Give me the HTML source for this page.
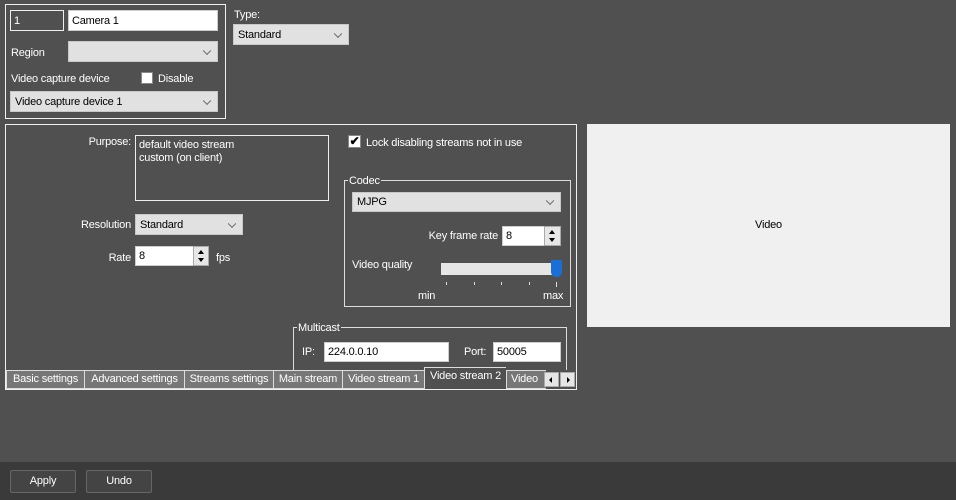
<!DOCTYPE html>
<html><head><meta charset="utf-8"><style>
*{box-sizing:border-box;margin:0;padding:0}
body{width:956px;height:500px;background:#505050;position:relative;overflow:hidden;font-family:"Liberation Sans",Arial,sans-serif;font-size:11px;letter-spacing:-0.2px;color:#fff}
.a{position:absolute}
.box{position:absolute;border:1px solid #f0f0f0}
.inp{position:absolute;background:#fff;color:#000;padding:3px 3px;line-height:14px;border:1px solid #ccc}
.cmb{position:absolute;background:#e1e1e1;color:#000;padding:0 4px;border:1px solid #c8c8c8}
.cmb:after{content:"";position:absolute;right:7px;top:50%;width:5px;height:5px;border-right:1px solid #666;border-bottom:1px solid #666;transform:translateY(-70%) rotate(45deg)}
.lbl{position:absolute;line-height:14px;white-space:nowrap}
.spin{position:absolute;background:#e6e6e6;border:1px solid #aaa}
.spin i{position:absolute;left:4px;width:0;height:0;border-left:3px solid transparent;border-right:3px solid transparent}
.leg{position:absolute;background:#505050;padding:0 1px;line-height:12px}
.tab{position:absolute;top:370px;height:19px;background:#777;border:1px solid #ddd;border-right:none;color:#fff;line-height:17px;text-align:center;white-space:nowrap;overflow:hidden}
.btn{position:absolute;top:470px;height:23px;background:#444;border:1px solid #666;border-radius:2px;text-align:center;line-height:21px}
</style></head><body>
<div class="box" style="left:5px;top:4px;width:221px;height:115px"></div>
<div class="inp" style="left:10px;top:10px;width:54px;height:21px;background:#505050;color:#fff;border:1px solid #eee">1</div>
<div class="inp" style="left:68px;top:10px;width:150px;height:21px">Camera 1</div>
<div class="lbl" style="left:11px;top:46px">Region</div>
<div class="cmb" style="left:68px;top:41px;width:150px;height:21px"></div>
<div class="lbl" style="left:11px;top:72px">Video capture device</div>
<div class="a" style="left:141px;top:72px;width:12px;height:12px;background:#fff;border:1px solid #888"></div>
<div class="lbl" style="left:158px;top:72px">Disable</div>
<div class="cmb" style="left:10px;top:91px;width:208px;height:21px;line-height:20px">Video capture device 1</div>
<div class="lbl" style="left:234px;top:8px">Type:</div>
<div class="cmb" style="left:233px;top:24px;width:116px;height:21px;line-height:20px">Standard</div>

<div class="box" style="left:5px;top:124px;width:572px;height:266px"></div>
<div class="lbl" style="left:60px;top:135px;width:71px;text-align:right">Purpose:</div>
<div class="a" style="left:135px;top:135px;width:194px;height:66px;border:1px solid #eee;padding:3px 3px;line-height:13px">default video stream<br>custom (on client)</div>
<div class="lbl" style="left:40px;top:218px;width:91px;text-align:right">Resolution</div>
<div class="cmb" style="left:135px;top:214px;width:108px;height:21px;line-height:20px">Standard</div>
<div class="lbl" style="left:60px;top:251px;width:71px;text-align:right">Rate</div>
<div class="inp" style="left:135px;top:246px;width:60px;height:20px;line-height:13px">8</div>
<div class="spin" style="left:193px;top:246px;width:16px;height:20px"><i style="top:3px;border-bottom:4px solid #000"></i><i style="top:11px;border-top:4px solid #000"></i></div>
<div class="lbl" style="left:216px;top:251px">fps</div>

<div class="a" style="left:348px;top:135px;width:13px;height:13px;background:#fff;border:1px solid #888;color:#000;font-size:12px;line-height:11px;text-align:center;font-weight:bold">✔</div>
<div class="lbl" style="left:366px;top:136px">Lock disabling streams not in use</div>

<div class="box" style="left:344px;top:180px;width:227px;height:127px;border-color:#ddd"></div>
<div class="leg" style="left:348px;top:175px">Codec</div>
<div class="cmb" style="left:352px;top:192px;width:209px;height:20px;line-height:19px">MJPG</div>
<div class="lbl" style="left:400px;top:229px;width:98px;text-align:right">Key frame rate</div>
<div class="inp" style="left:502px;top:226px;width:43px;height:20px;line-height:13px">8</div>
<div class="spin" style="left:544px;top:226px;width:17px;height:20px"><i style="top:3px;border-bottom:4px solid #000"></i><i style="top:11px;border-top:4px solid #000"></i></div>
<div class="lbl" style="left:352px;top:258px">Video quality</div>
<div class="a" style="left:441px;top:263px;width:116px;height:12px;background:#e6e6e6"></div>
<div class="a" style="left:551px;top:260px;width:11px;height:17px;background:#1a6fd6;border-radius:0 0 5px 5px"></div>
<div class="a" style="left:446px;top:282px;width:1px;height:3px;background:#ddd"></div>
<div class="a" style="left:474px;top:282px;width:1px;height:3px;background:#ddd"></div>
<div class="a" style="left:501px;top:282px;width:1px;height:3px;background:#ddd"></div>
<div class="a" style="left:529px;top:282px;width:1px;height:3px;background:#ddd"></div>
<div class="a" style="left:556px;top:282px;width:1px;height:5px;background:#ddd"></div>
<div class="lbl" style="left:418px;top:289px">min</div>
<div class="lbl" style="left:543px;top:289px">max</div>

<div class="a" style="left:293px;top:327px;width:274px;height:43px;border:1px solid #ddd;border-bottom:none"></div>
<div class="leg" style="left:297px;top:322px">Multicast</div>
<div class="lbl" style="left:302px;top:345px">IP:</div>
<div class="inp" style="left:324px;top:342px;width:125px;height:20px;line-height:13px">224.0.0.10</div>
<div class="lbl" style="left:464px;top:345px">Port:</div>
<div class="inp" style="left:493px;top:342px;width:68px;height:20px;line-height:13px">50005</div>

<div class="tab" style="left:6px;width:78px">Basic settings</div>
<div class="tab" style="left:84px;width:100px">Advanced settings</div>
<div class="tab" style="left:184px;width:89px">Streams settings</div>
<div class="tab" style="left:273px;width:69px">Main stream</div>
<div class="tab" style="left:342px;width:82px">Video stream 1</div>
<div class="tab" style="left:424px;width:82px;top:367px;height:22px;background:#505050;border-bottom:none">Video stream 2</div>
<div class="tab" style="left:506px;width:40px;text-align:left;padding-left:4px">Video</div>
<div class="a" style="left:544px;top:372px;width:15px;height:15px;background:#e6e6e6;border:1px solid #aaa"><i style="position:absolute;left:4px;top:4px;border-top:3px solid transparent;border-bottom:3px solid transparent;border-right:3px solid #000"></i></div>
<div class="a" style="left:560px;top:372px;width:15px;height:15px;background:#e6e6e6;border:1px solid #aaa"><i style="position:absolute;left:6px;top:4px;border-top:3px solid transparent;border-bottom:3px solid transparent;border-left:3px solid #000"></i></div>

<div class="a" style="left:587px;top:124px;width:363px;height:203px;background:#f0f0f0;color:#000;text-align:center;line-height:203px">Video</div>

<div class="a" style="left:0;top:462px;width:956px;height:38px;background:#3a3a3a"></div>
<div class="btn" style="left:10px;width:66px">Apply</div>
<div class="btn" style="left:86px;width:66px">Undo</div>
</body></html>
